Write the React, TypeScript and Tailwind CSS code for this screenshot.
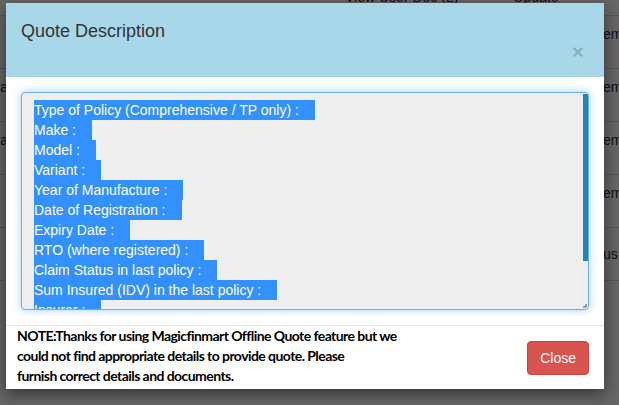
import React from 'react'

const fields = [
  'Type of Policy (Comprehensive / TP only) :',
  'Make :',
  'Model :',
  'Variant :',
  'Year of Manufacture :',
  'Date of Registration :',
  'Expiry Date :',
  'RTO (where registered) :',
  'Claim Status in last policy :',
  'Sum Insured (IDV) in the last policy :',
  'Insurer :',
]

// page behind the backdrop (only the edges show)
const rows = [
  { left: '', right: '', mid: true },
  { left: '', right: 'em' },
  { left: 'ra', right: 'em' },
  { left: 'ra', right: 'em' },
  { left: '', right: 'em' },
  { left: '', right: 'us', center: true },
]

function Backdrop() {
  return (
    <div className="absolute inset-0 bg-white font-['Liberation_Sans',Arial,sans-serif] text-[14px] text-[#1f2d3d]">
      <div className="-mt-[37px] flex flex-col">
        {rows.map((r, i) => (
          <div
            key={i}
            className={`flex h-[53px] border-b border-[#d8d8d8] ${
              r.mid ? 'items-end pb-[7px]' : r.center ? 'items-center' : 'items-start pt-[8px]'
            }`}
          >
            <div className="flex w-[6px] justify-end overflow-hidden whitespace-nowrap">
              <span className="-mr-[2px]">{r.left}</span>
            </div>
            <div className="flex flex-1 whitespace-nowrap">
              {r.mid && (
                <>
                  <span className="ml-[339px]">View User Doc (2)</span>
                  <span className="ml-[55px]">Update</span>
                </>
              )}
            </div>
            <div className="w-[15px] overflow-hidden whitespace-nowrap">
              <span className="-ml-[1px] block">{r.right}</span>
            </div>
          </div>
        ))}
      </div>
      <div className="absolute inset-0 bg-black/[0.6]" />
    </div>
  )
}

export default function App() {
  return (
    <div className="relative h-[405px] w-[619px] overflow-hidden">
      <Backdrop />

      <div className="absolute left-[6px] top-[3px] w-[598px] bg-white shadow-[0_5px_15px_rgba(0,0,0,0.5)] font-['Liberation_Sans',Arial,sans-serif]">
        {/* header */}
        <div className="relative h-[74px] bg-[#a9d7ea] px-[15px] pt-[15px]">
          <h4 className="text-[18px] leading-[26px] text-[#333]">Quote Description</h4>
          <button className="absolute right-[20px] top-[38px] text-[21px] font-bold leading-none text-black/20">×</button>
        </div>

        {/* body */}
        <div className="p-[15px]">
          <div className="relative h-[218px] overflow-hidden rounded-[4px] border border-[#66afe9] bg-[#eee] pl-[12px] pt-[7px] shadow-[0_0_8px_rgba(102,175,233,0.6)]">
            <div className="text-[14px] leading-[20px] text-white">
              {fields.map(f => (
                <div key={f} className="h-[20px] w-fit whitespace-pre bg-[#3390ff] pr-[16px]">
                  {f}
                </div>
              ))}
            </div>
            <div className="absolute right-0 top-[1px] h-[167px] w-[5px] bg-[#2385b4]" />
            <svg className="absolute bottom-[1px] right-[1px]" width="5" height="5" viewBox="0 0 5 5">
              <path d="M4 1v3H1" stroke="#555" strokeWidth="1" fill="none" />
            </svg>
          </div>
        </div>

        {/* footer */}
        <div className="flex h-[64px] items-center justify-between border-t border-[#e5e5e5] pl-[11px] pr-[15px]">
          <p className="self-start font-['Lato',sans-serif] text-[14px] font-bold leading-[20px] tracking-[-0.56px] text-black">
            NOTE:Thanks for using Magicfinmart Offline Quote feature but we
            <br />
            could not find appropriate details to provide quote. Please
            <br />
            furnish correct details and documents.
          </p>
          <button className="mt-[1px] h-[34px] rounded-[4px] border border-[#d43f3a] bg-[#d9534f] px-[12px] text-[14px] text-white">
            Close
          </button>
        </div>
      </div>
    </div>
  )
}
